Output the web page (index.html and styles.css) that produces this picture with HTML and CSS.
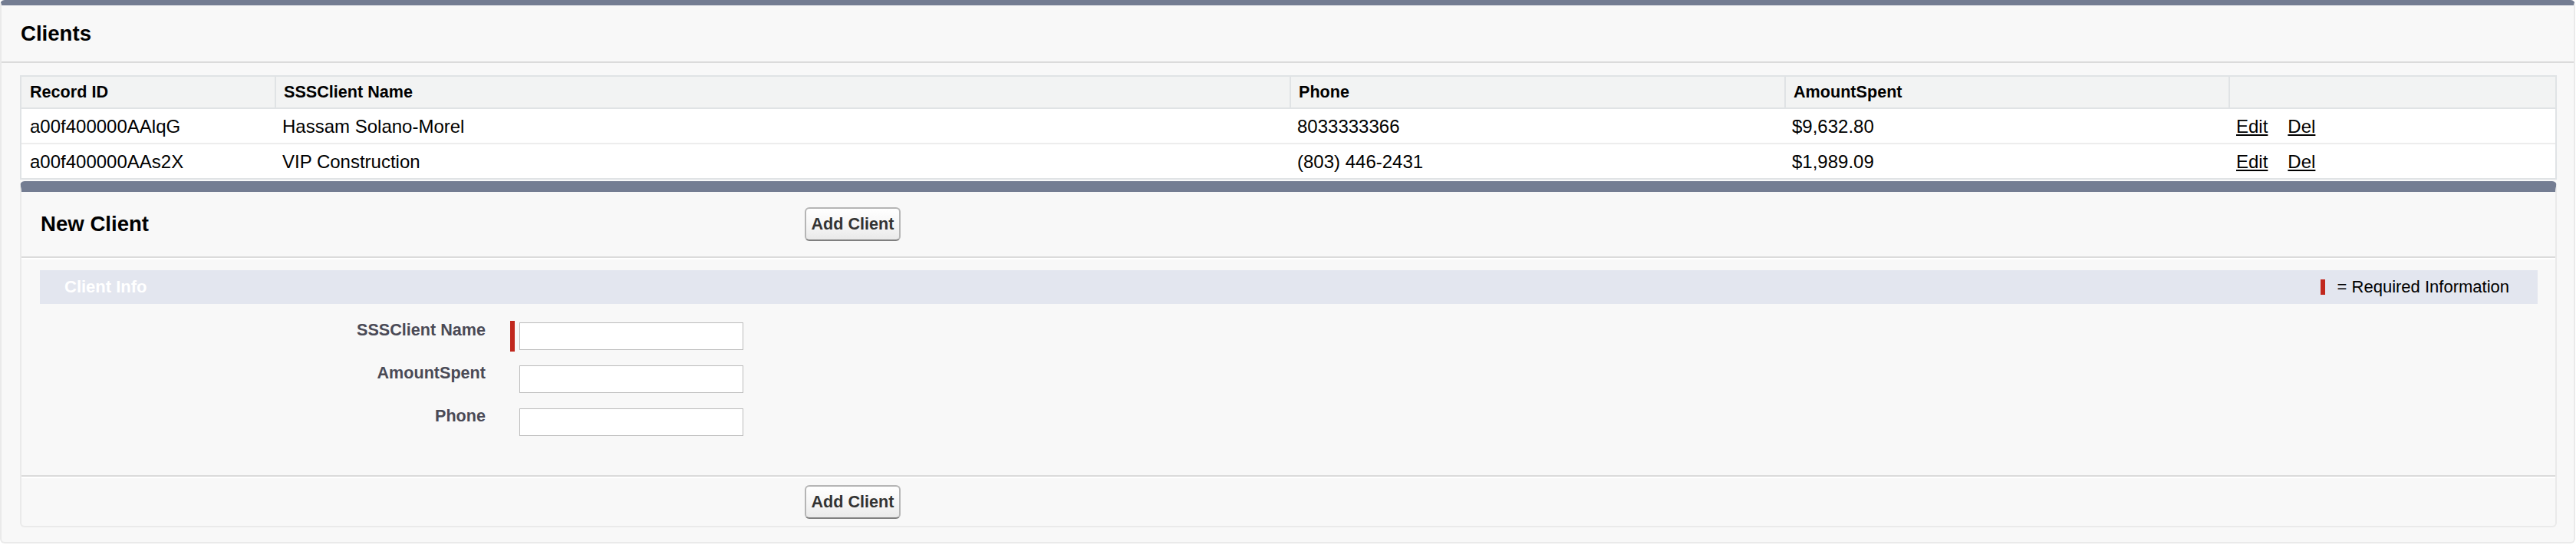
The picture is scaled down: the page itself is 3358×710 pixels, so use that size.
FILE: index.html
```html
<!DOCTYPE html>
<html lang="en">
<head>
<meta charset="utf-8">
<title>Clients</title>
<link rel="stylesheet" href="styles.css">
</head>
<body>
<div class="outer">
  <div class="outer-header"><h2 class="title">Clients</h2></div>
  <div class="outer-body">
    <table class="list">
      <thead>
        <tr>
          <th class="c1">Record ID</th>
          <th class="c2">SSSClient Name</th>
          <th class="c3">Phone</th>
          <th class="c4">AmountSpent</th>
          <th class="c5"></th>
        </tr>
      </thead>
      <tbody>
        <tr class="first">
          <td>a00f400000AAlqG</td>
          <td>Hassam Solano-Morel</td>
          <td>8033333366</td>
          <td>$9,632.80</td>
          <td><a href="#" class="act">Edit</a><a href="#" class="act del">Del</a></td>
        </tr>
        <tr>
          <td>a00f400000AAs2X</td>
          <td>VIP Construction</td>
          <td>(803) 446-2431</td>
          <td>$1,989.09</td>
          <td><a href="#" class="act">Edit</a><a href="#" class="act del">Del</a></td>
        </tr>
      </tbody>
    </table>

    <div class="block">
      <div class="block-header">
        <h2 class="title">New Client</h2>
        <div><button class="btn" type="button">Add Client</button></div>
      </div>
      <div class="block-body">
        <div class="subheader">
          <h3 class="sub-title">Client Info</h3>
          <div class="legend"><span class="req-mark"></span><span>= Required Information</span></div>
        </div>
        <div class="form">
          <label class="lbl">SSSClient Name</label>
          <div class="field required"><input class="inp" type="text"></div>
          <label class="lbl">AmountSpent</label>
          <div class="field"><input class="inp" type="text"></div>
          <label class="lbl">Phone</label>
          <div class="field"><input class="inp" type="text"></div>
        </div>
      </div>
      <div class="block-footer">
        <div></div>
        <div><button class="btn" type="button">Add Client</button></div>
      </div>
    </div>
  </div>
</div>
</body>
</html>
```

FILE: styles.css
```css
* { box-sizing: border-box; }

html, body {
  margin: 0;
  padding: 0;
  background: #ffffff;
  font-family: "Liberation Sans", Arial, sans-serif;
  color: #000;
}

.outer {
  width: 3357px;
  height: 708px;
  background: #f8f8f8;
  border: 2px solid #eaeaea;
  border-top: 7px solid #747d92;
  border-radius: 6px;
}

.outer-header {
  height: 75px;
  display: flex;
  align-items: center;
  padding-left: 25px;
  border-bottom: 2px solid #dbdbdb;
}

.title {
  margin: 0;
  font-size: 27.6px;
  font-weight: bold;
  color: #000;
}

.outer-body {
  padding: 16px 22px 0 24px;
}

.list {
  width: 100%;
  table-layout: fixed;
  border-collapse: separate;
  border-spacing: 0;
  border: 2px solid #e0e3e5;
  background: #ffffff;
}

.list th {
  background: #f2f3f3;
  font-size: 21.6px;
  font-weight: bold;
  text-align: left;
  line-height: 40px;
  padding: 0 10px;
  border-bottom: 2px solid #e0e3e5;
  white-space: nowrap;
}

.list th + th { border-left: 2px solid #e0e3e5; padding-left: 10px; }

.list th.c1 { width: 330px; padding-left: 11px; }
.list th.c2 { width: 1323px; }
.list th.c3 { width: 645px; }
.list th.c4 { width: 579px; }

.list td {
  font-size: 24px;
  line-height: 42px;
  padding: 2px 10px 0;
  white-space: nowrap;
}

.list td:first-child { padding-left: 11px; }
.list td + td { padding-left: 10px; }

.list tr.first td { border-bottom: 2px solid #ededed; }

.act {
  color: #000;
  text-decoration: underline;
}

.act.del { margin-left: 26px; }

.block {
  margin-top: 2px;
  height: 451px;
  background: #f8f8f8;
  border: 2px solid #eaeaea;
  border-top: 14px solid #747d92;
  border-radius: 6px;
}

.block-header {
  height: 86px;
  display: grid;
  grid-template-columns: 1021px auto;
  align-items: center;
  padding-left: 25px;
  border-bottom: 2px solid #dbdbdb;
  box-shadow: 0 2px 0 #ffffff;
}

.btn {
  width: 125px;
  height: 44px;
  padding: 0;
  font-family: "Liberation Sans", Arial, sans-serif;
  font-size: 21.6px;
  font-weight: bold;
  color: #333333;
  background: linear-gradient(#ffffff, #f4f4f4 60%, #e9e9e9);
  border: 2px solid #b5b5b5;
  border-bottom-color: #7f7f7f;
  border-radius: 6px;
}

.block-header .btn { margin-left: -25px; }

.block-body {
  height: 283px;
  padding-top: 16px;
}

.subheader {
  height: 44px;
  margin: 0 23px 0 24px;
  background: #e3e6ef;
  display: flex;
  align-items: center;
  justify-content: space-between;
  padding: 0 37px 0 32px;
}

.sub-title {
  margin: 0;
  font-size: 22px;
  font-weight: bold;
  color: #ffffff;
}

.legend {
  display: flex;
  align-items: center;
  gap: 16px;
  font-size: 22px;
  color: #000;
}

.req-mark {
  display: block;
  width: 6px;
  height: 20px;
  background: #c1281e;
}

.form {
  display: grid;
  grid-template-columns: 605px auto;
  column-gap: 32px;
  row-gap: 16px;
  padding-top: 22px;
  justify-content: start;
}

.lbl {
  text-align: right;
  font-size: 21.6px;
  font-weight: bold;
  line-height: 24px;
  color: #4a4a56;
}

.field {
  height: 40px;
  display: flex;
  align-items: center;
  border-left: 6px solid transparent;
  padding-left: 6px;
}

.field.required { border-left-color: #c1281e; }

.inp {
  width: 292px;
  height: 36px;
  margin: 0;
  border: 1px solid #bbbbbb;
  background: #ffffff;
  padding: 0 4px;
  font-size: 22px;
}

.block-footer {
  height: 66px;
  display: grid;
  grid-template-columns: 1021px auto;
  align-items: start;
  padding-top: 11px;
  border-top: 2px solid #dbdbdb;
  box-shadow: inset 0 2px 0 #ffffff;
}
```
